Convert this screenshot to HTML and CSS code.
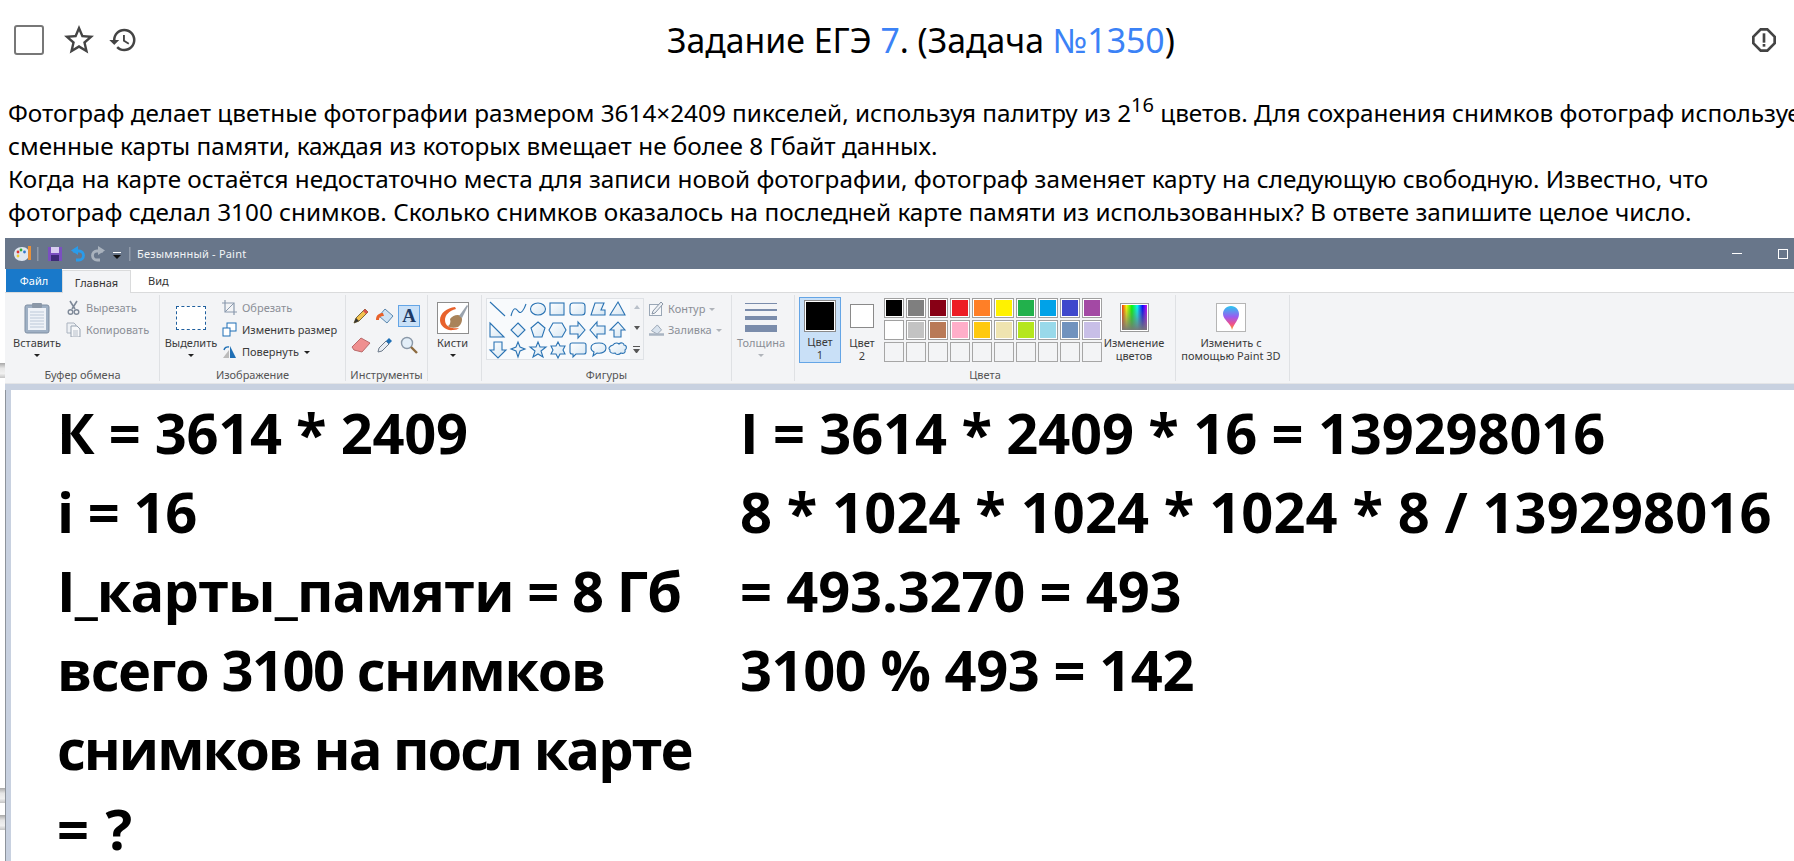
FILE: index.html
```html
<!DOCTYPE html>
<html lang="ru">
<head>
<meta charset="utf-8">
<title>Задание ЕГЭ 7</title>
<link rel="stylesheet" href="styles.css">
</head>
<body>
<header class="top">
  <div class="top-left">
    <span class="check"></span>
    <svg class="ic-star" viewBox="0 0 24 24"><path d="M22 9.24l-7.19-.62L12 2 9.19 8.63 2 9.24l5.46 4.73L5.82 21 12 17.27 18.18 21l-1.63-7.03L22 9.24zM12 15.4l-3.76 2.27 1-4.28-3.32-2.88 4.38-.38L12 6.1l1.71 4.04 4.38.38-3.32 2.88 1 4.28L12 15.4z"/></svg>
    <svg class="ic-hist" viewBox="0 0 24 24"><path d="M13 3a9 9 0 0 0-9 9H1l3.89 3.89.07.14L9 12H6c0-3.87 3.13-7 7-7s7 3.13 7 7-3.13 7-7 7c-1.93 0-3.68-.79-4.94-2.06l-1.42 1.42A8.954 8.954 0 0 0 13 21a9 9 0 0 0 0-18zm-1 5v5l4.28 2.54.72-1.21-3.5-2.08V8H12z"/></svg>
  </div>
  <h1 class="title">Задание ЕГЭ <a>7</a>. (Задача <a>№1350</a>)</h1>
  <svg class="ic-alert" viewBox="0 0 24 24"><path d="M14.9 3H9.1L3 9.1v5.8L9.1 21h5.8l6.1-6.1V9.1L14.9 3zM19 14.1 14.1 19H9.9L5 14.1V9.9L9.9 5h4.2L19 9.9v4.2z"/><rect x="11" y="7" width="2" height="7"/><rect x="11" y="15" width="2" height="2"/></svg>
</header>

<p class="task">Фотограф делает цветные фотографии размером 3614×2409 пикселей, используя палитру из 2<sup>16</sup> цветов. Для сохранения снимков фотограф использует<br>сменные карты памяти, каждая из которых вмещает не более 8 Гбайт данных.<br>Когда на карте остаётся недостаточно места для записи новой фотографии, фотограф заменяет карту на следующую свободную. Известно, что<br>фотограф сделал 3100 снимков. Сколько снимков оказалось на последней карте памяти из использованных? В ответе запишите целое число.</p>

<span class="peek p1"></span>
<span class="peek p2"></span>
<span class="peek p3"></span>

<section class="paint">
  <div class="titlebar">
    <svg class="qa" width="122" height="20" viewBox="0 0 122 20">
      <path d="M12 3c5 0 7 3 7 7s-3 7-7 7c-5 0-8-3-8-7s3-7 8-7z" fill="#dfe6ee"/><circle cx="8" cy="8" r="1.4" fill="#d33"/><circle cx="11" cy="6" r="1.4" fill="#3a3"/><circle cx="14.500" cy="8" r="1.4" fill="#37c"/><circle cx="8" cy="12" r="1.4" fill="#ec3"/>
      <rect x="18" y="2" width="3" height="14" fill="#e8913a"/>
      <rect x="27" y="3" width="1.500" height="14" fill="#8f9aa9"/>
      <rect x="38" y="3" width="14" height="14" fill="#7a4fc0"/><rect x="41" y="3" width="8" height="6" fill="#d8cdf0"/><rect x="41" y="11" width="8" height="6" fill="#3e2a78"/>
      <path d="M63 7h6a4.500 4.500 0 0 1 0 9h-3" fill="none" stroke="#2a9bea" stroke-width="2.800"/><path d="M68 2v9l-7-4.500z" fill="#2a9bea"/>
      <path d="M93 7h-6a4.500 4.500 0 0 0 0 9h3" fill="none" stroke="#a9b2bd" stroke-width="2.800"/><path d="M88 2v9l7-4.500z" fill="#a9b2bd"/>
      <rect x="103" y="8" width="8" height="1" fill="#fff"/><path d="M103 11h8l-4 4z" fill="#111"/>
      <rect x="119" y="3" width="1.500" height="14" fill="#8f9aa9"/>
    </svg>
    <span class="wintitle">Безымянный - Paint</span>
    <span class="winmin"></span>
    <span class="winmax"></span>
  </div>
  <nav class="tabs">
    <span class="tab-file">Файл</span>
    <span class="tab-home">Главная</span>
    <span class="tab-view">Вид</span>
  </nav>
  <div class="ribbon">
    <div class="grp g1">
      <div class="grp-body">
        <div class="big w60 nudge">
          <div class="big-ic"><svg width="26" height="32" viewBox="0 0 26 32"><rect x="1" y="3" width="24" height="28" rx="2" fill="#9fb0c4" stroke="#7f8fa3"/><rect x="4" y="6" width="18" height="22" fill="#eef2f8"/><path d="M6 10h14M6 13h14M6 16h14M6 19h14M6 22h14M6 25h14" stroke="#bcc8d8"/><rect x="8" y="1" width="10" height="5" rx="1" fill="#8b98a8"/></svg></div>
          <span class="t">Вставить</span><span class="caret"></span>
        </div>
        <div class="rows">
          <div class="row off"><svg class="sic" viewBox="0 0 15 15"><path d="M4 1l5 8M11 1L6 9" stroke="#7f8a99" stroke-width="1.6"/><circle cx="4.500" cy="12" r="2.300" fill="none" stroke="#7f8a99" stroke-width="1.4"/><circle cx="10.500" cy="12" r="2.300" fill="none" stroke="#7f8a99" stroke-width="1.4"/></svg><span>Вырезать</span></div>
          <div class="row off"><svg class="sic" viewBox="0 0 15 15"><path d="M1 1h7l2 2v8H1z" fill="#eef1f5" stroke="#aab3bf"/><path d="M5 4h6l3 3v8H5z" fill="#f7f8fa" stroke="#98a3b1"/><path d="M7 9h5M7 11h5M7 13h5" stroke="#b6bec9"/></svg><span>Копировать</span></div>
        </div>
      </div>
      <div class="lbl">Буфер обмена</div>
    </div>
    <div class="grp g2">
      <div class="grp-body">
        <div class="big w62">
          <div class="big-ic"><span class="marquee"></span></div>
          <span class="t">Выделить</span><span class="caret"></span>
        </div>
        <div class="rows">
          <div class="row off"><svg class="sic" viewBox="0 0 15 15"><path d="M3 0v12h12M0 3h12v12" fill="none" stroke="#8b9aae" stroke-width="1.2"/><path d="M3 12l9-9" stroke="#8b9aae"/></svg><span>Обрезать</span></div>
          <div class="row"><svg class="sic" viewBox="0 0 15 15"><rect x="5" y="1" width="9" height="8" fill="#fff" stroke="#1f6fb5"/><rect x="1" y="6" width="7" height="8" fill="#fff" stroke="#1f6fb5"/></svg><span>Изменить размер</span></div>
          <div class="row"><svg class="sic" viewBox="0 0 15 15"><path d="M8 2l6 12H8z" fill="#1f6fb5"/><path d="M7 6v8H1z" fill="#bbb"/><path d="M2 6a4 4 0 0 1 5-3" fill="none" stroke="#1f6fb5" stroke-width="1.4"/></svg><span>Повернуть</span><span class="caret inl"></span></div>
        </div>
      </div>
      <div class="lbl">Изображение</div>
    </div>
    <div class="grp g3">
      <div class="grp-body">
        <div class="tools">
          <span class="tool"><svg width="18" height="18" viewBox="0 0 18 18"><path d="M2 16l2-5L13 2l3 3-9 9z" fill="#f2c14e" stroke="#7c6a3a"/><path d="M13 2l3 3-2 2-3-3z" fill="#d9534f"/><path d="M2 16l2-5 3 3z" fill="#333"/></svg></span>
          <span class="tool"><svg width="20" height="18" viewBox="0 0 20 18"><path d="M10 2l8 7-6 7-8-7z" fill="#cfe3f5" stroke="#5b87ad"/><path d="M1 13c0-5 3-7 7-7l1 3c-3 0-5 1-5 4z" fill="#e8622c"/></svg></span>
          <span class="tool on"><b class="a">A</b></span>
          <span class="tool"><svg width="20" height="16" viewBox="0 0 20 16"><path d="M1 10l9-9 9 5-8 9-8-2z" fill="#ef8f8f" stroke="#b96a6a"/></svg></span>
          <span class="tool"><svg width="18" height="18" viewBox="0 0 18 18"><path d="M2 16l1-4 7-7 3 3-7 7z" fill="#e8edf3" stroke="#6d7a8a"/><path d="M10 5l3-3 3 3-3 3z" fill="#1f6fb5"/></svg></span>
          <span class="tool"><svg width="18" height="18" viewBox="0 0 18 18"><circle cx="7" cy="7" r="5.500" fill="#e3eef8" stroke="#8a98a8" stroke-width="1.4"/><path d="M11 11l6 6" stroke="#8c6a3f" stroke-width="2.400"/></svg></span>
        </div>
      </div>
      <div class="lbl">Инструменты</div>
    </div>
    <div class="grp g4">
      <div class="grp-body">
        <div class="big full">
          <div class="big-ic"><svg width="32" height="32" viewBox="0 0 32 32"><rect x=".5" y=".5" width="31" height="31" fill="#fff" stroke="#8e8e8e"/><path d="M18 5c-8 1-15 6-15 13 0 6 6 11 13 10 3 0 5-1 6-2-7 1-14-1-14-8 0-5 4-9 11-11z" fill="#e8622c"/><path d="M13 17c3-4 8-5 11-3 2 3 1 8-3 11-4 1-8 1-10-1 2-1 3-4 2-7z" fill="#a9835a"/><path d="M22 14l8-11 1 1-6 12z" fill="#9aa3ad"/></svg></div>
          <span class="t">Кисти</span><span class="caret"></span>
        </div>
      </div>
      <div class="lbl"></div>
    </div>
    <div class="grp g5">
      <div class="grp-body">
        <div class="shapes">
          <svg width="143" height="60" viewBox="0 0 143 60">
            <defs><linearGradient id="sf" x1="0" y1="0" x2="1" y2="1"><stop offset="0" stop-color="#fff"/><stop offset="1" stop-color="#d6e6f2"/></linearGradient></defs>
            <g fill="url(#sf)" stroke="#2a73b3" stroke-width="1.1">
              <path d="M3 3l15 14" fill="none"/>
              <path d="M24 17c3-12 6-6 8-4s5-2 7-8" fill="none"/>
              <ellipse cx="51" cy="10" rx="7.500" ry="6"/>
              <rect x="63" y="4" width="14" height="12"/>
              <rect x="83" y="4" width="15" height="12" rx="3"/>
              <path d="M104 16l4-12h9l-3 7h4v5z"/>
              <path d="M131 3l7 13h-15z"/>
              <path d="M3 24l14 14H3z"/>
              <path d="M31 24l7 7-7 7-7-7z"/>
              <path d="M51 23l7 6-3 9h-8l-3-9z"/>
              <path d="M66 24h9l4 7-4 7h-9l-4-7z"/>
              <path d="M83 27h8v-4l7 8-7 8v-4h-8z"/>
              <path d="M118 27h-8v-4l-7 8 7 8v-4h8z"/>
              <path d="M131 23l7 8h-4v7h-7v-7h-4z"/>
              <path d="M7 43h8v8h4l-8 8-8-8h4z"/>
              <path d="M31 43l2 5 5 2-5 2-2 6-2-6-5-2 5-2z"/>
              <path d="M51 43l2 5h6l-5 4 2 6-5-3-5 3 2-6-5-4h6z"/>
              <path d="M71 43l2 4h5l-2 4 2 4h-5l-2 4-2-4h-5l2-4-2-4h5z"/>
              <path d="M85 44h12a2 2 0 0 1 2 2v7a2 2 0 0 1-2 2h-8l-3 3v-3h-1a2 2 0 0 1-2-2v-7a2 2 0 0 1 2-2z"/>
              <path d="M112 44c5 0 7 2 7 5s-3 6-9 5l-4 3 1-4c-2-1-3-2-3-4 0-3 3-5 8-5z"/>
              <path d="M126 46c2-3 5-2 6-1 2-2 5-1 5 1 3 0 3 4 1 5 1 3-2 4-4 3-2 2-5 2-6 0-3 1-6-1-5-3-2-1-1-4 3-5z"/>
            </g>
          </svg>
          <div class="scroll">
            <span class="tri-up"></span>
            <span class="tri-down"></span>
            <span class="tri-more"></span>
          </div>
        </div>
        <div class="rows r2">
          <div class="row off"><svg class="sic" viewBox="0 0 15 15"><rect x=".5" y="3.500" width="12" height="11" fill="#f7f8fa" stroke="#9aa7b6"/><path d="M4 10l8-9 2 2-8 9-3 1z" fill="#eef1f5" stroke="#8996a6"/></svg><span>Контур</span><span class="caret inl pale"></span></div>
          <div class="row off"><svg class="sic" viewBox="0 0 18 15"><path d="M3 9l7-7 5 6-5 5z" fill="#d9e3ee" stroke="#8d9aab"/><rect y="12" width="18" height="3" fill="#a9b4c2"/></svg><span>Заливка</span><span class="caret inl pale"></span></div>
        </div>
      </div>
      <div class="lbl">Фигуры</div>
    </div>
    <div class="grp g6">
      <div class="grp-body">
        <div class="big full off">
          <div class="big-ic"><span class="thick"><i class="t1"></i><i class="t2"></i><i class="t3"></i><i class="t4"></i></span></div>
          <span class="t">Толщина</span><span class="caret pale"></span>
        </div>
      </div>
      <div class="lbl"></div>
    </div>
    <div class="grp g7">
      <div class="grp-body">
        <div class="col1"><span class="sw1"></span><span class="t">Цвет<br>1</span></div>
        <div class="col2"><span class="sw2"></span><span class="t">Цвет<br>2</span></div>
        <div class="palette">
          <i class="c" style="background:#000"></i><i class="c" style="background:#7f7f7f"></i><i class="c" style="background:#880015"></i><i class="c" style="background:#ed1c24"></i><i class="c" style="background:#ff7f27"></i><i class="c" style="background:#fff200"></i><i class="c" style="background:#22b14c"></i><i class="c" style="background:#00a2e8"></i><i class="c" style="background:#3f48cc"></i><i class="c" style="background:#a349a4"></i>
          <i class="c" style="background:#fff"></i><i class="c" style="background:#c3c3c3"></i><i class="c" style="background:#b97a57"></i><i class="c" style="background:#ffaec9"></i><i class="c" style="background:#ffc90e"></i><i class="c" style="background:#efe4b0"></i><i class="c" style="background:#b5e61d"></i><i class="c" style="background:#99d9ea"></i><i class="c" style="background:#7092be"></i><i class="c" style="background:#c8bfe7"></i>
          <i class="e"></i><i class="e"></i><i class="e"></i><i class="e"></i><i class="e"></i><i class="e"></i><i class="e"></i><i class="e"></i><i class="e"></i><i class="e"></i>
        </div>
        <div class="big edit">
          <div class="big-ic"><span class="rainbow"></span></div>
          <span class="t">Изменение<br>цветов</span>
        </div>
      </div>
      <div class="lbl">Цвета</div>
    </div>
    <div class="grp g8">
      <div class="grp-body">
        <div class="big full">
          <div class="big-ic"><span class="p3d"><svg width="18" height="30" viewBox="0 0 18 30"><defs><linearGradient id="dr" x1="0" y1="0" x2="0" y2="1"><stop offset="0" stop-color="#28c8f0"/><stop offset=".45" stop-color="#9a5cf0"/><stop offset=".75" stop-color="#f0508a"/><stop offset="1" stop-color="#f5a623"/></linearGradient></defs><path d="M9 3c5 0 8 4 8 8 0 6-5 9-7 16-1-7-9-10-9-16 0-4 3-8 8-8z" fill="url(#dr)"/></svg></span></div>
          <span class="t">Изменить с<br>помощью Paint 3D</span>
        </div>
      </div>
      <div class="lbl"></div>
    </div>
  </div>
  <div class="gutter-top"></div>
  <div class="work">
    <div class="sheet">
      <div class="notes">
        <div class="l1">К = 3614 * 2409</div>
        <div class="l2">i = 16</div>
        <div class="l3">I_карты_памяти = 8 Гб</div>
        <div class="l4">всего 3100 снимков</div>
        <div class="l5">снимков на посл карте</div>
        <div class="l6">= ?</div>
      </div>
      <div class="notes n2">
        <div class="r1">I = 3614 * 2409 * 16 = 139298016</div>
        <div class="r3">8 * 1024 * 1024 * 1024 * 8 / 139298016</div>
        <div class="r4">= 493.3270 = 493</div>
        <div class="r5">3100 % 493 = 142</div>
      </div>
    </div>
  </div>
</section>
</body>
</html>
```

FILE: styles.css
```css
* { box-sizing: border-box; }
html, body { margin: 0; padding: 0; height: 861px; overflow: hidden; background: #fff; }
body { font-family: "Noto Sans", "Open Sans", sans-serif; color: #000; width: 1794px; position: relative; }

.top { height: 80px; display: flex; align-items: center; padding: 0 14px 1px 14px; }
.top-left { width: 653px; display: flex; align-items: center; }
.check { width: 30px; height: 30px; border: 2px solid #777; border-radius: 3px; background: #fff; }
.ic-star { width: 36px; height: 36px; margin-left: 17px; fill: #444; }
.ic-hist { width: 30px; height: 30px; margin-left: 11px; fill: #444; }
.ic-alert { width: 32px; height: 32px; margin-left: auto; fill: #444; }
.title { margin: 0; font-size: 33.8px; font-weight: 400; line-height: 40px; white-space: nowrap; }
.title a { color: #3b82f6; }

.task { margin: 0; padding: 16px 0 0 8px; height: 158px; font-size: 24.3px; line-height: 33px; white-space: nowrap; }
.task sup { font-size: 20px; line-height: 0; vertical-align: 10px; }

.peek { position: absolute; left: 0; width: 5px; height: 15px; background: linear-gradient(180deg, #a8a8a8, #e6e6e6 35%, #f0f0f0 70%, #c4c4c4); }
.p1 { top: 363px; }
.p2 { top: 788px; }
.p3 { top: 815px; }

.paint { margin-left: 5px; width: 1789px; height: 623px; display: flex; flex-direction: column; background: #c8d1e0; }
.titlebar { height: 31px; flex: none; background: #68768a; display: flex; align-items: center; }
.qa { margin-left: 5px; flex: none; }
.wintitle { margin-left: 5px; font-size: 11px; color: #f2f4f6; letter-spacing: .2px; }
.winmin { margin-left: auto; width: 10px; height: 1px; background: #fff; }
.winmax { margin-left: 36px; margin-right: 6px; width: 10px; height: 10px; border: 1px solid #fff; }

.tabs { height: 23px; flex: none; background: #fff; display: flex; align-items: stretch; font-size: 11px; color: #333; padding-left: 1px; }
.tab-file { width: 56px; background: #1979ca; color: #fff; display: flex; align-items: center; justify-content: center; }
.tab-home { width: 69px; background: #f3f4f6; border: 1px solid #dadbdc; border-bottom: 0; display: flex; align-items: center; justify-content: center; position: relative; top: 1px; }
.tab-view { margin-left: 17px; display: flex; align-items: center; }

.ribbon { height: 92px; flex: none; display: flex; background: #f3f4f6; border-top: 1px solid #dadbdc; border-bottom: 1px solid #e4e5e7; padding: 2px 0 0 1px; font-size: 11px; color: #3b3b3b; }
.grp { height: 86px; flex: none; display: flex; flex-direction: column; border-right: 1px solid #dfe1e4; }
.grp-body { height: 73px; display: flex; }
.lbl { height: 13px; text-align: center; line-height: 13px; color: #555; white-space: nowrap; }
.g1 { width: 154px; }
.g2 { width: 186px; }
.g3 { width: 82px; }
.g4 { width: 54px; }
.g5 { width: 250px; }
.g6 { width: 63px; }
.g7 { width: 381px; }
.g8 { width: 114px; }

.big { display: flex; flex-direction: column; align-items: center; flex: none; white-space: nowrap; }
.big .t { line-height: 13px; text-align: center; }
.big-ic { height: 41px; display: flex; align-items: center; justify-content: center; padding-top: 4px; }
.w60 { width: 60px; }
.w62 { width: 62px; }
.nudge { padding-left: 2px; }
.full { width: 100%; }
.caret { width: 0; height: 0; border: 3px solid transparent; border-top: 3px solid #222; border-bottom: 0; margin-top: 5px; }
.caret.inl { margin: 2px 0 0 0; }
.caret.pale { border-top-color: #b0b4ba; }

.rows { display: flex; flex-direction: column; padding-top: 1px; }
.row { height: 22px; display: flex; align-items: center; gap: 5px; white-space: nowrap; }
.sic { width: 15px; height: 15px; flex: none; }
.off { color: #8b8f96; }
.marquee { width: 30px; height: 24px; border: 1px dashed #1f5f9e; background: #fff; }

.tools { display: grid; grid-template-columns: repeat(3, 24px); grid-auto-rows: 22px; row-gap: 7px; padding: 10px 0 0 4px; }
.tool { width: 22px; height: 22px; display: flex; align-items: center; justify-content: center; border: 1px solid transparent; }
.tool.on { background: #c9e0f7; border-color: #64a5e6; }
.a { font-family: "Liberation Serif", serif; font-size: 19px; color: #1d3a66; }

.g4 .big, .g6 .big { padding-right: 4px; }
.g8 .big { padding-right: 3px; }
.shapes { display: flex; margin: 3px 0 0 4px; height: 62px; border: 1px solid #dfe2e6; width: 158px; }
.shapes svg { background: #f8fafc; flex: none; }
.scroll { width: 13px; display: flex; flex-direction: column; align-items: center; justify-content: space-between; padding: 6px 0; background: #f3f4f6; }
.tri-up { border: 3px solid transparent; border-bottom: 4px solid #b9c0c9; border-top: 0; }
.tri-down { border: 3px solid transparent; border-top: 4px solid #555; border-bottom: 0; }
.tri-more { width: 7px; border-top: 1px solid #555; }
.tri-more::after { content: ""; display: block; margin-top: 2px; border: 3.5px solid transparent; border-top: 4px solid #555; border-bottom: 0; }
.r2 { margin-left: 5px; padding-top: 3px; }
.r2 .row { height: 21px; gap: 4px; }

.thick { width: 32px; display: flex; flex-direction: column; gap: 5px; }
.thick i { display: block; background: #7a8cab; }
.t1 { height: 1px; }
.t2 { height: 2px; }
.t3 { height: 4px; }
.t4 { height: 7px; }

.col1 { width: 42px; height: 66px; margin: 2px 0 0 4px; flex: none; background: #c9e0f7; border: 1px solid #64a5e6; display: flex; flex-direction: column; align-items: center; }
.sw1 { width: 32px; height: 32px; margin-top: 2px; background: #000; border: 1px solid #8a8a8a; box-shadow: inset 0 0 0 1px #fff; }
.col2 { width: 42px; flex: none; display: flex; flex-direction: column; align-items: center; }
.sw2 { width: 24px; height: 24px; margin: 9px 0 5px; background: #fff; border: 1px solid #8a8a8a; }
.col1 .t, .col2 .t { line-height: 13px; text-align: center; margin-top: 3px; }
.palette { display: grid; grid-template-columns: repeat(10, 20px); grid-auto-rows: 20px; gap: 2px; margin: 3px 0 0 1px; flex: none; align-content: start; }
.c { border: 1px solid #a0a0a0; box-shadow: inset 0 0 0 1px #fff; }
.e { border: 1px solid #a6a6a6; }
.edit { width: 60px; margin-left: 2px; }
.rainbow { width: 29px; height: 29px; border: 1px solid #9a9a9a; box-shadow: inset 0 0 0 1px #fff; background: linear-gradient(180deg, transparent, #777), linear-gradient(90deg, #f00, #ff0, #0f0, #0ff, #00f, #f0f); }
.p3d { width: 30px; height: 29px; border: 1px solid #b5b5b5; background: #fff; display: flex; align-items: center; justify-content: center; overflow: hidden; }

.gutter-top { height: 6px; flex: none; background: #c8d1e0; }
.work { flex: 1; min-height: 0; padding-left: 5px; background: #c8d1e0; border-left: 1px solid #8d939b; }
.sheet { height: 100%; background: #fff; display: flex; padding: 3px 0 0 46px; overflow: hidden; }
.notes { width: 683px; flex: none; font-family: "Open Sans", "Noto Sans", sans-serif; font-weight: 700; font-size: 56px; line-height: 79px; white-space: nowrap; color: #000; }
.n2 { width: auto; }
.l1 { letter-spacing: -.25px; }
.l2 { letter-spacing: -.4px; }
.l3 { letter-spacing: -.9px; }
.l4 { letter-spacing: -1.45px; }
.l5 { letter-spacing: -2px; }
.l6 { line-height: 60px; margin-top: 10px; letter-spacing: 1px; }
.r1 { letter-spacing: -.1px; }
.r3 { letter-spacing: .12px; }
.r4 { letter-spacing: -.15px; }
.r5 { letter-spacing: -.43px; }
```
